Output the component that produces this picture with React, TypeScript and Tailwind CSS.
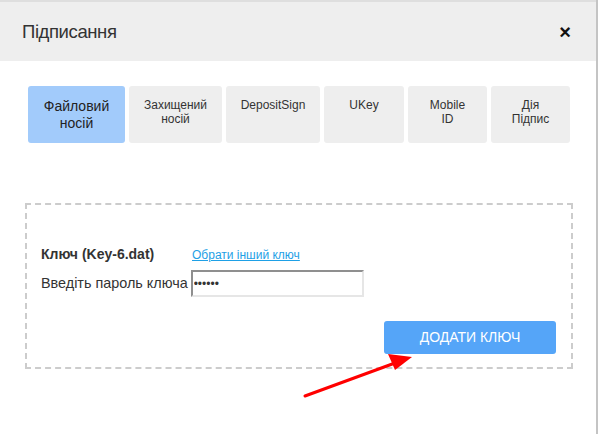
import React from "react";

const tabs = [
  { label: ["Файловий", "носій"], w: "w-[97px]", active: true },
  { label: ["Захищений", "носій"], w: "w-[93px]" },
  { label: ["DepositSign"], w: "w-[94px]" },
  { label: ["UKey"], w: "w-[80px]" },
  { label: ["Mobile", "ID"], w: "w-[79px]" },
  { label: ["Дія", "Підпис"], w: "w-[79px]" },
];

export default function App() {
  return (
    <div className="relative h-[434px] w-[600px] overflow-hidden bg-white font-['Liberation_Sans',Arial,sans-serif] text-[#333]">
      <div className="h-full w-[598px] border-r-2 border-[#c4c4c4]">
        {/* header */}
        <div className="flex h-[61px] items-center justify-between border-t-2 border-[#dedede] bg-[#eeeeee] pl-[22px] pr-[25px]">
          <h2 className="text-[18.5px] font-normal tracking-[-0.4px] text-[#333]">Підписання</h2>
          <span className="text-[20px] font-bold leading-none text-[#111]">×</span>
        </div>

        {/* tabs */}
        <div className="mt-[25px] flex gap-[4px] pl-[28px]">
          {tabs.map((t) => (
            <div
              key={t.label.join(" ")}
              className={`${t.w} flex h-[57px] flex-col items-center rounded-[3px] text-center ${
                t.active
                  ? "justify-center bg-[#a2cbfb] text-[14px] leading-[17px] text-[#222]"
                  : "bg-[#eeeeee] pt-[12px] text-[12px] leading-[14px] text-[#333]"
              }`}
            >
              {t.label.map((l) => (
                <span key={l}>{l}</span>
              ))}
            </div>
          ))}
        </div>

        {/* key box */}
        <div className="ml-[25px] mt-[60px] h-[166px] w-[548px] border-2 border-dashed border-[#cccccc] pl-[14px] pr-[15px] pt-[39px]">
          <div className="flex items-center">
            <span className="w-[151px] text-[14px] font-bold text-[#333]">Ключ (Key-6.dat)</span>
            <a href="#" className="text-[12px] text-[#1ea0e6] underline">
              Обрати інший ключ
            </a>
          </div>
          <div className="mt-[5px] flex items-center">
            <span className="text-[14.4px] text-[#333]">Введіть пароль ключа</span>
            <input
              type="password"
              defaultValue="secret"
              className="ml-[3px] h-[27px] w-[173px] border-2 border-[#e6e6e6] border-l-[#8f8f8f] border-t-[#8f8f8f] px-[1px] text-[12px] outline-none"
            />
          </div>
          <div className="mt-[24px] flex justify-end">
            <button className="h-[33px] w-[172px] rounded-[3px] bg-[#55a5f8] text-[14px] text-white">
              ДОДАТИ КЛЮЧ
            </button>
          </div>
        </div>
      </div>

      {/* red arrow overlay */}
      <svg className="absolute left-0 top-0" width="600" height="434" viewBox="0 0 600 434">
        <line x1="305" y1="396" x2="395" y2="363" stroke="#ff0000" strokeWidth="3" strokeLinecap="round" />
        <polygon points="412,357 388,354 395,370" fill="#ff0000" />
      </svg>
    </div>
  );
}
